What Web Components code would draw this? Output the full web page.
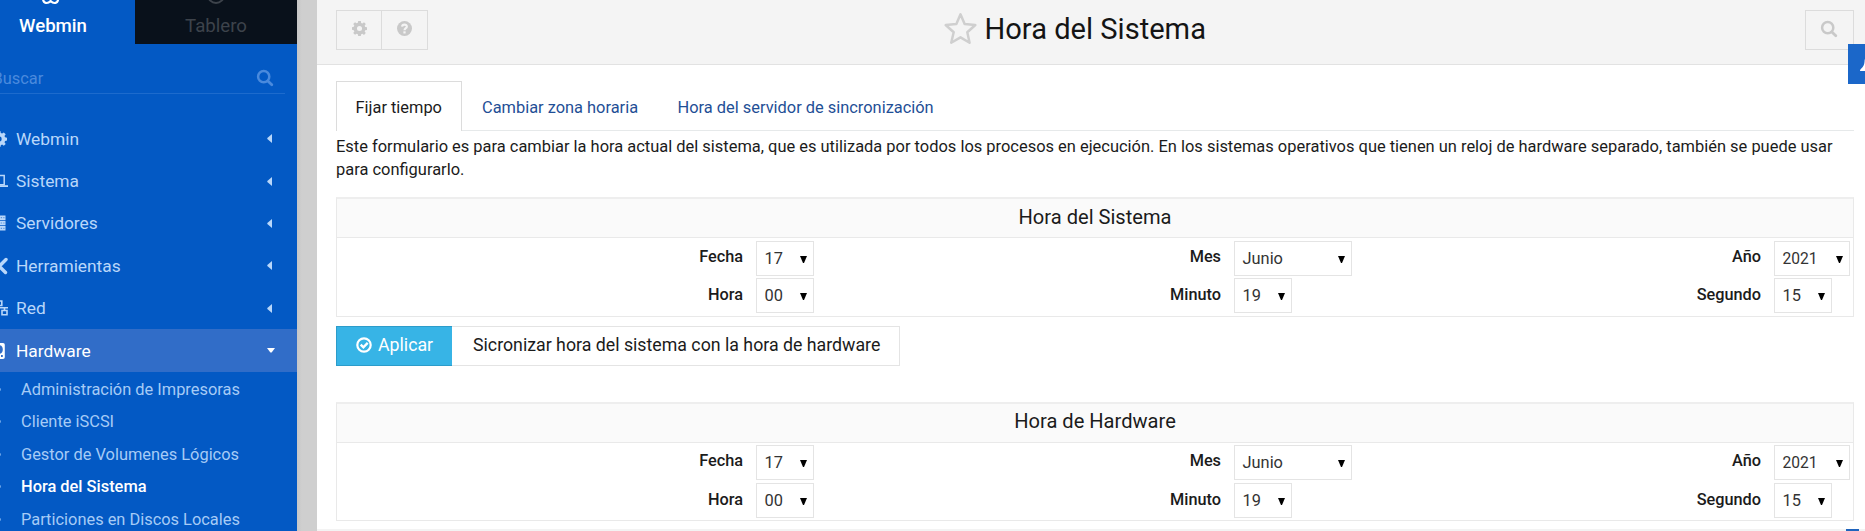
<!DOCTYPE html>
<html lang="es">
<head>
<meta charset="utf-8">
<title>Hora del Sistema</title>
<style>
html,body{margin:0;height:531px;overflow:hidden;background:#fff}
body{font-family:Roboto,"Liberation Sans",sans-serif;font-size:16.4px;color:#1b1b1b}
</style>
</head>
<body>
<wm-app>
  <wm-sidebar slot="side"></wm-sidebar>
  <wm-header slot="main">Hora del Sistema</wm-header>
  <wm-tabs slot="main"></wm-tabs>
  <wm-note slot="main">Este formulario es para cambiar la hora actual del sistema, que es utilizada por todos los procesos en ejecución. En los sistemas operativos que tienen un reloj de hardware separado, también se puede usar<br>para configurarlo.</wm-note>
  <wm-time-panel slot="main">Hora del Sistema</wm-time-panel>
  <wm-actions slot="main"></wm-actions>
  <wm-time-panel slot="main" class="hw">Hora de Hardware</wm-time-panel>
  <wm-footer slot="main"></wm-footer>
</wm-app>
<script>
const define = (name, html) => customElements.define(name, class extends HTMLElement {
  constructor() {
    super();
    const t = document.createElement('template');
    t.innerHTML = typeof html === 'function' ? html(this) : html;
    this.attachShadow({mode: 'open'}).append(t.content.cloneNode(true));
  }
});

const GLYPHS = {
  gear: '<path fill="currentColor" fill-rule="evenodd" d="M6.6 0h2.8l.4 2 1.3.6L12.8 1.400l1.900 1.900-1.200 1.700.6 1.300 1.900.4v2.800l-1.900.4-.6 1.300 1.200 1.700-1.900 1.900-1.700-1.200-1.300.6-.4 1.800H6.600l-.4-1.900-1.300-.6-1.700 1.200-1.900-1.900 1.200-1.700-.6-1.300L0 9.400V6.600l1.900-.4.6-1.300-1.200-1.700 1.900-1.900 1.700 1.200 1.300-.6zM8 5.300a2.700 2.700 0 1 0 0 5.400 2.700 2.700 0 0 0 0-5.400z"/>',
  help: '<circle cx="8" cy="8" r="8" fill="currentColor"/><path fill="none" stroke="#f4f4f4" stroke-width="2.300" d="M5.400 6C5.600 3.200 10.600 3.200 10.500 6c0 1.600-2.500 1.700-2.500 3.800"/><path fill="#f4f4f4" d="M6.800 11h2.400v2.300H6.800z"/>',
  search: '<circle cx="6.700" cy="6.700" r="5.600" fill="none" stroke="currentColor" stroke-width="2.500"/><path d="M10.900 10.900l3.900 3.900" stroke="currentColor" stroke-width="2.800" stroke-linecap="round"/>',
  check: '<circle cx="8" cy="8" r="6.700" fill="none" stroke="currentColor" stroke-width="2.200"/><path d="M4.700 7.600l2.700 2.700 4.300-4.400" fill="none" stroke="currentColor" stroke-width="2.400"/>',
  star: '<path d="M8 1.100l2 4.700 5.200.5-3.900 3.500 1.100 5.100L8 12.300l-4.500 2.600 1.200-5.100L.8 6.300 6 5.800z" fill="none" stroke="currentColor" stroke-width="1.200" stroke-linejoin="round"/>',
  laptop: '<path d="M0 2.500h13.200v9.200H0z" fill="none" stroke="currentColor" stroke-width="1.500"/><path d="M-2 12.200h19v1.800H-2z" fill="currentColor"/>',
  server: '<path d="M0 .5h14.500v4.400H0zM0 5.800h14.500v4.400H0zM0 11.100h14.500v4.400H0z" fill="currentColor"/><path d="M9.700 2.700h1.400M12.300 2.700h1.200M9.700 8h1.400M12.300 8h1.200M9.700 13.300h1.400M12.300 13.300h1.200" stroke="#5b95dc" stroke-width="1.200"/>',
  tools: '<path d="M1.500 1.500l13 13M15 1.500L2 14.500" stroke="currentColor" stroke-width="3.400" stroke-linecap="round"/>',
  net: '<path d="M5.200 1h5.600v4.500H5.200zM.7 10.500h4.500v4.300H.7zM11 10.500h5v4.300h-5zM8 5.500v2.300M3 10V7.800h14M13.500 8v2.500" fill="none" stroke="currentColor" stroke-width="1.600"/>',
  disk: '<path fill="currentColor" fill-rule="evenodd" d="M2 0h10q1.800 0 1.800 1.800v12.400q0 1.800-1.800 1.800H2q-2 0-2-2V2q0-2 2-2zm5.500 2a4.500 4.500 0 1 0 0 9c3 0 4.300-2 4.300-4.500S10.500 2 7.500 2zM10 12v2h1.800v-2z"/>'
};
customElements.define('wm-icon', class extends HTMLElement {
  constructor() {
    super();
    this.attachShadow({mode: 'open'});
  }
  connectedCallback() {
    this.shadowRoot.innerHTML = '<style>:host{display:block;width:16px;height:16px;flex:none}svg{display:block;width:100%;height:100%;overflow:visible}</style><svg viewBox="0 0 16 16">' + GLYPHS[this.getAttribute('name')] + '</svg>';
  }
});

define('wm-app', `<style>
:host{display:grid;grid-template-columns:297px 20px 1fr;width:1865px;height:531px;overflow:hidden;position:relative}
.bar{background:linear-gradient(90deg,#c7c7c7,#cfcfcf 5px)}
.main{min-width:0;display:flex;flex-direction:column;height:531px;overflow:hidden}
.bell{position:absolute;left:1848px;top:44px;width:17px;height:40px;background:#1b67c9;overflow:hidden}
.bell svg{display:block}
.corner{position:absolute;left:1846px;top:529px;width:13px;height:2px;background:#1f64bd}
</style>
<slot name="side"></slot><div class="bar"></div><div class="main"><slot name="main"></slot></div>
<div class="bell"><svg width="17" height="40"><path fill="#fff" d="M20 10v17h-8c0-3 4-3 4.500-9 0-3 1-5 3.500-8z"/></svg></div><div class="corner"></div>`);

define('wm-nav-item', el => `<style>
:host{display:flex;align-items:center;height:42.4px;width:297px;font-size:17.35px;color:#b9d7fa;flex:none}
:host([open]){background:#316dc8;color:#fff;height:43px}
wm-icon{margin-left:-9.500px;margin-right:9.500px}
span{flex:1}
svg{display:block;margin-right:25px}
:host([open]) svg{margin-right:22px}
</style><wm-icon name="${el.getAttribute('icon')}"></wm-icon><span><slot></slot></span>` +
(el.hasAttribute('open') ? '<svg width="8" height="5"><path d="M0 0h8L4.600 4.600h-1.200z" fill="currentColor"/></svg>'
 : '<svg width="5" height="9"><path d="M5 0v9L.3 5v-1z" fill="currentColor"/></svg>'));

define('wm-sub-item', `<style>
:host{display:flex;align-items:center;height:32.5px;font-size:16.4px;color:#a6cbf6;flex:none;white-space:nowrap}
:host([active]){color:#fff;font-weight:500}
i{width:3px;height:3px;border-radius:2px;background:#6fa6e8;margin:0 20px 0 -2px}
</style><i></i><span><slot></slot></span>`);

define('wm-sidebar', `<style>
:host{display:flex;flex-direction:column;background:#0359c4;height:531px;overflow:hidden}
.top{display:grid;grid-template-columns:135px 162px;height:43.5px;flex:none}
.t{position:relative;font-size:18.65px;line-height:22px;text-align:center;padding-top:14.500px;height:29px}
.t svg{position:absolute;top:0}
.a{color:#fff;font-weight:500;padding-right:29px}
.b{color:#3d434b;background:#09111b}
.find{display:flex;justify-content:space-between;align-items:center;height:31px;margin:19.5px 12px 23.5px 0;border-bottom:1px solid #1d6bcd;color:#4a8add;font-size:16.4px;flex:none;box-sizing:border-box}
.find span{margin-left:-7.500px}
.find wm-icon{margin-right:12.500px}
</style>
<div class="top"><div class="t a"><svg style="left:42px" width="18" height="5"><path d="M1 -1C1.500 3.600 5.500 4.200 8.600 1 11.700 4.200 15.700 3.600 16.200 -1" fill="none" stroke="#fff" stroke-width="2.200"/></svg>Webmin</div>
<div class="t b"><svg style="left:71px" width="20" height="5"><circle cx="10" cy="-5" r="8" fill="none" stroke="#3d434b" stroke-width="2"/></svg>Tablero</div></div>
<div class="find"><span>Buscar</span><wm-icon name="search"></wm-icon></div>
<wm-nav-item icon="gear">Webmin</wm-nav-item>
<wm-nav-item icon="laptop">Sistema</wm-nav-item>
<wm-nav-item icon="server">Servidores</wm-nav-item>
<wm-nav-item icon="tools">Herramientas</wm-nav-item>
<wm-nav-item icon="net">Red</wm-nav-item>
<wm-nav-item icon="disk" open>Hardware</wm-nav-item>
<wm-sub-item style="margin-top:.5px">Administración de Impresoras</wm-sub-item>
<wm-sub-item>Cliente iSCSI</wm-sub-item>
<wm-sub-item>Gestor de Volumenes Lógicos</wm-sub-item>
<wm-sub-item active>Hora del Sistema</wm-sub-item>
<wm-sub-item>Particiones en Discos Locales</wm-sub-item>`);

define('wm-header', `<style>
:host{display:grid;grid-template-columns:608px auto 1fr;height:65px;box-sizing:border-box;padding:10px 11px 0 19px;background:#f4f4f4;border-bottom:1px solid #e2e2e2;flex:none;align-items:start}
.g{display:flex}
.b{box-sizing:border-box;height:40px;width:46px;border:1px solid #dcdcdc;display:flex;justify-content:center;padding-top:10px;color:#c9c9c9}
.b wm-icon{width:15px;height:15px}
.b+.b{margin-left:-1px;width:47px}
.s{justify-self:end;width:49px}
.s wm-icon{width:16px;height:16px;margin-right:1px}
h1{margin:0;font-size:29.1px;font-weight:400;line-height:38px;display:flex;color:#141414}
h1 wm-icon{width:33px;height:33px;color:#cfcfcf;margin:2px 7.500px 0 0}
</style>
<div class="g"><div class="b"><wm-icon name="gear"></wm-icon></div><div class="b"><wm-icon name="help"></wm-icon></div></div>
<h1><wm-icon name="star"></wm-icon><span><slot></slot></span></h1>
<div class="b s"><wm-icon name="search"></wm-icon></div>`);

define('wm-tabs', `<style>
:host{display:flex;height:50px;margin:16px 11px 0 19px;box-sizing:border-box;box-shadow:inset 0 -1px #e6e9ea;flex:none;color:#1f4f96;line-height:53px}
.on{width:126px;box-sizing:border-box;border:1px solid #dcdcdc;border-bottom:0;background:#fff;color:#1b1b1b;padding-left:18.5px;line-height:51px}
span{margin-left:20px}
span+span{margin-left:39.5px}
</style><div class="on">Fijar tiempo</div><span>Cambiar zona horaria</span><span>Hora del servidor de sincronización</span>`);

define('wm-note', `<style>
:host{display:block;margin:4px 11px 0 19px;height:62px;line-height:23px;white-space:nowrap;font-size:16.46px;flex:none}
</style><slot></slot>`);

define('wm-select', `<style>
:host{display:flex;align-items:center;box-sizing:border-box;width:58px;height:35px;border:1px solid #e4e4e4;background:#fff;color:#333;padding:0 6.5px 0 7.5px;justify-content:space-between}
svg{display:block;margin-top:2px}
</style><span><slot></slot></span><svg width="7" height="7"><path d="M0 0h7L4 7h-1z" fill="#000"/></svg>`);

define('wm-time-panel', `<style>
:host{display:block;box-sizing:border-box;height:120px;margin:0 11px 0 19px;border:1px solid #e9e9e9;border-top:2px solid #eee;flex:none}
:host(.hw){margin-top:36px;height:119px}
.h{height:38px;line-height:36px;background:#fafafa;border-bottom:1px solid #e9e9e9;font-size:20.1px;text-align:center;box-sizing:content-box}
:host(.hw) .h{line-height:35px}
.g{display:grid;grid-template-columns:406px 71px 407px 131px 409px 78px;row-gap:2px;padding-top:3px}
:host(.hw) .g{padding-top:2px;row-gap:3px}
b{font-weight:500;font-size:16.3px;text-align:right;line-height:32px;white-space:nowrap}
.r2{line-height:34px}
wm-select{margin-left:13px}
.n2{font-size:15.6px}
:host(.hw) .r2{line-height:33px}
</style>
<div class="h"><slot></slot></div>
<div class="g">
<b>Fecha</b><wm-select>17</wm-select><b>Mes</b><wm-select style="width:118px">Junio</wm-select><b>Año</b><wm-select class="n2" style="width:76px">2021</wm-select>
<b class="r2">Hora</b><wm-select>00</wm-select><b class="r2">Minuto</b><wm-select>19</wm-select><b class="r2">Segundo</b><wm-select>15</wm-select>
</div>`);

define('wm-actions', `<style>
:host{display:flex;height:40px;margin:9px 0 0 19px;font-size:17.75px;line-height:37px;flex:none}
div{box-sizing:border-box;border:1px solid #e4e4e4;white-space:nowrap}
.p{display:flex;width:116px;background:#37b4e6;border:1px solid #2c9cca;border-right:0;color:#fff;padding-left:18.5px}
.p wm-icon{margin:9.5px 6.5px 0 0;width:16px;height:16px}
.s{width:448px;border-left:0;padding-left:21px}
</style><div class="p"><wm-icon name="check"></wm-icon><span>Aplicar</span></div><div class="s">Sicronizar hora del sistema con la hora de hardware</div>`);

define('wm-footer', `<style>:host{display:block;margin-top:8px;height:2px;background:#f3f3f3;flex:none}</style>`);
</script>
</body>
</html>
